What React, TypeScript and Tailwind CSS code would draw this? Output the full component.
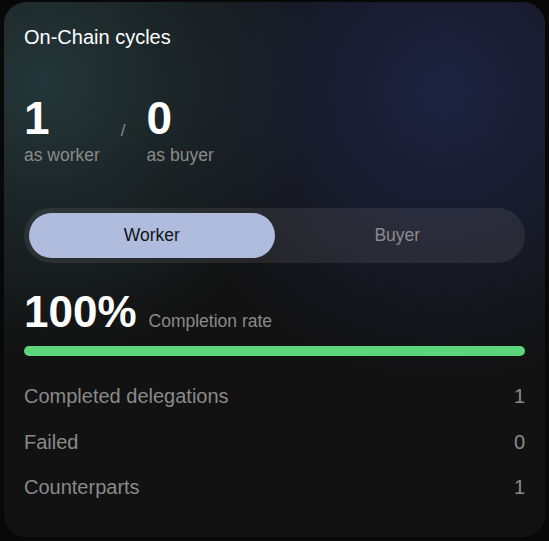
export default function App() {
  const rows = [
    { label: "Completed delegations", value: "1" },
    { label: "Failed", value: "0" },
    { label: "Counterparts", value: "1" },
  ];
  return (
    <div
      className="min-h-[541px] w-[549px] bg-[#080808] pl-[4px] pt-[2px]"
      style={{ fontFamily: '"Liberation Sans", Arial, sans-serif' }}
    >
      <div className="w-[541px] h-[535px] rounded-[22px] bg-[#121212] bg-[radial-gradient(circle_340px_at_40px_80px,rgba(38,58,62,0.9),rgba(38,58,62,0)_80%),radial-gradient(circle_340px_at_440px_90px,rgba(30,36,68,0.95),rgba(30,36,68,0)_85%)] px-5 pt-[21px]">
        <div className="text-[20px] leading-[28px] text-white">On-Chain cycles</div>

        <div className="mt-[44px] flex items-center gap-[21px]">
          <div className="flex flex-col">
            <span className="text-[46px] leading-none font-bold text-white">1</span>
            <span className="mt-[2px] text-[17.5px] leading-[24px] text-[#8a8a8a]">as worker</span>
          </div>
          <span className="text-[17px] text-[#8a8a8a]">/</span>
          <div className="flex flex-col">
            <span className="text-[46px] leading-none font-bold text-white">0</span>
            <span className="mt-[2px] text-[17.5px] leading-[24px] text-[#8a8a8a]">as buyer</span>
          </div>
        </div>

        <div className="mt-[41px] flex h-[55px] rounded-full bg-[rgba(255,255,255,0.08)] p-[5px]">
          <div className="flex flex-1 items-center justify-center rounded-full bg-[#afbcde] text-[17.5px] text-[#111318]">
            Worker
          </div>
          <div className="flex flex-1 items-center justify-center text-[17.5px] text-[#8c8c8c]">
            Buyer
          </div>
        </div>

        <div className="mt-[26px] flex items-baseline gap-[12px]">
          <span className="text-[44px] leading-[46px] font-bold text-white">100%</span>
          <span className="text-[17.5px] text-[#8a8a8a]">Completion rate</span>
        </div>

        <div className="mt-[11px] h-[10px] w-full rounded-full bg-[#5bd67a]" />

        <div className="mt-[26px] flex flex-col gap-[17.5px]">
          {rows.map((r) => (
            <div key={r.label} className="flex justify-between text-[20px] leading-[28px] text-[#8a8a8a]">
              <span>{r.label}</span>
              <span>{r.value}</span>
            </div>
          ))}
        </div>
      </div>
    </div>
  );
}
